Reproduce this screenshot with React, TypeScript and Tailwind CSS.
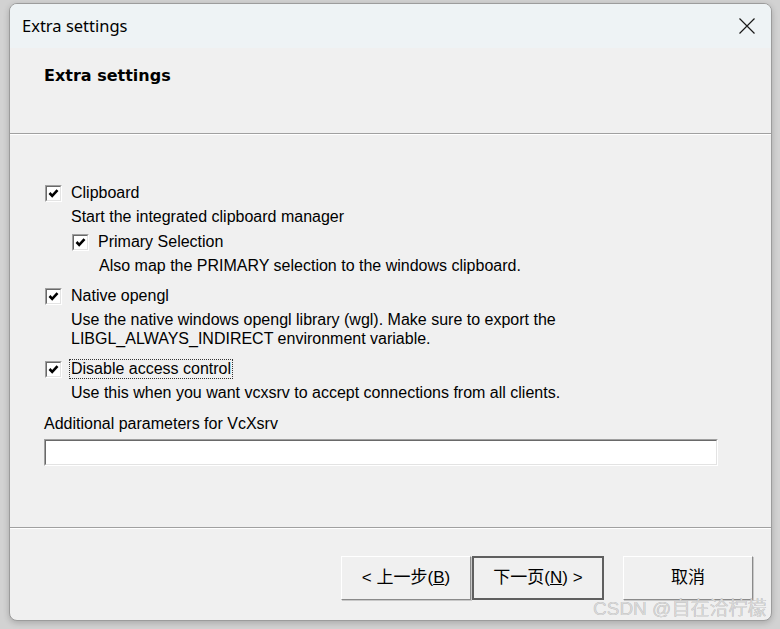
import React from 'react';

const body = { fontFamily: '"Liberation Sans", Arial, sans-serif' };
const cjk = { fontFamily: '"Liberation Sans", "Noto Sans CJK SC", sans-serif' };

function CheckBox() {
  return (
    <div className="w-[17px] h-[17px] border border-t-[#a0a0a0] border-l-[#a0a0a0] border-r-white border-b-white flex-shrink-0">
      <div className="w-full h-full border border-t-[#696969] border-l-[#696969] border-r-[#e3e3e3] border-b-[#e3e3e3] bg-white flex items-center justify-center">
        <svg width="11" height="11" viewBox="0 0 11 11">
          <path d="M1.5 5 L4.2 7.8 L9.5 2.2" fill="none" stroke="#000" strokeWidth="2.6" />
        </svg>
      </div>
    </div>
  );
}

function Option({ label, focused }: { label: string; focused?: boolean }) {
  return (
    <div className="flex items-center h-[24px]">
      <CheckBox />
      <span
        className={`ml-[8px] leading-[18px] px-[1px] -mx-[1px] ${
          focused ? 'outline outline-1 outline-dotted outline-[#333]' : ''
        }`}
      >
        {label}
      </span>
    </div>
  );
}

function Button({ children, primary }: { children: React.ReactNode; primary?: boolean }) {
  return (
    <div
      className={`h-[44px] flex items-center justify-center text-[17px] text-black ${
        primary
          ? 'w-[132px] border-2 border-[#5f5f5f] bg-[#f0f0f0]'
          : 'w-[130px] border border-t-white border-l-white border-r-[#8a8a8a] border-b-[#8a8a8a] bg-[#f0f0f0] shadow-[1px_1px_0_#c8c8c8]'
      }`}
      style={cjk}
    >
      {children}
    </div>
  );
}

export default function App() {
  return (
    <div className="w-[780px] h-[629px] bg-[#d2d2d2] pl-[9px] pt-[3px] relative overflow-hidden">
      <div className="w-[763px] h-[618px] rounded-[8px] border border-[#9c9c9c] bg-[#f0f0f0] overflow-hidden flex flex-col shadow-[0_2px_6px_rgba(0,0,0,0.2)]">
        {/* title bar */}
        <div className="h-[44px] bg-[#eef3f5] flex items-center justify-between pl-[12px] pr-[16px]">
          <span className="text-[16.5px] text-black" style={{ fontFamily: '"Noto Sans", sans-serif' }}>
            Extra settings
          </span>
          <svg width="16" height="16" viewBox="0 0 16 16">
            <path d="M0.5 0.5 L15.5 15.5 M15.5 0.5 L0.5 15.5" stroke="#1a1a1a" strokeWidth="1.2" />
          </svg>
        </div>

        {/* header */}
        <div className="h-[85px] pl-[34px] pt-[18px]">
          <div className="text-[16px] font-bold leading-[20px] text-black" style={{ fontFamily: '"DejaVu Sans", sans-serif' }}>
            Extra settings
          </div>
        </div>
        <div className="h-px bg-[#a0a0a0]" />
        <div className="h-px bg-white" />

        {/* content */}
        <div className="flex-1 pl-[35px] pt-[46px] text-[16px] text-black" style={body}>
          <Option label="Clipboard" />
          <div className="pl-[26px] h-[24px] flex items-center">Start the integrated clipboard manager</div>
          <div className="pl-[27px] mt-[1px]">
            <Option label="Primary Selection" />
            <div className="pl-[27px] h-[24px] flex items-center">Also map the PRIMARY selection to the windows clipboard.</div>
          </div>
          <div className="mt-[6px]">
            <Option label="Native opengl" />
          </div>
          <div className="pl-[26px] mt-[2px] leading-[19px]">
            <div>Use the native windows opengl library (wgl). Make sure to export the</div>
            <div>LIBGL_ALWAYS_INDIRECT environment variable.</div>
          </div>
          <div className="mt-[9px]">
            <Option label="Disable access control" focused />
          </div>
          <div className="pl-[26px] h-[24px] flex items-center">Use this when you want vcxsrv to accept connections from all clients.</div>
          <div className="-ml-[1px] mt-[7px] h-[24px] flex items-center">Additional parameters for VcXsrv</div>
          <div className="-ml-[1px] mt-[3px] w-[674px] h-[27px] border border-t-[#a0a0a0] border-l-[#a0a0a0] border-r-white border-b-white">
            <div className="w-full h-full border border-t-[#696969] border-l-[#696969] border-r-[#e3e3e3] border-b-[#e3e3e3] bg-white" />
          </div>
        </div>

        <div className="h-px bg-[#a0a0a0]" />
        <div className="h-px bg-white" />

        {/* buttons */}
        <div className="h-[91px] flex items-start justify-end pr-[18px] pt-[27px]">
          <Button>
            &lt; 上一步(<span className="underline">B</span>)
          </Button>
          <div className="ml-[1px]">
            <Button primary>
              下一页(<span className="underline">N</span>) &gt;
            </Button>
          </div>
          <div className="ml-[19px]">
            <Button>取消</Button>
          </div>
        </div>
      </div>

      <div
        className="absolute left-[593px] top-[597px] text-[19px] text-[#d8d8d8] leading-[24px] [text-shadow:0_0_0.5px_#9a9a9a]"
        style={cjk}
      >
        CSDN @自在洽柠檬
      </div>
    </div>
  );
}
